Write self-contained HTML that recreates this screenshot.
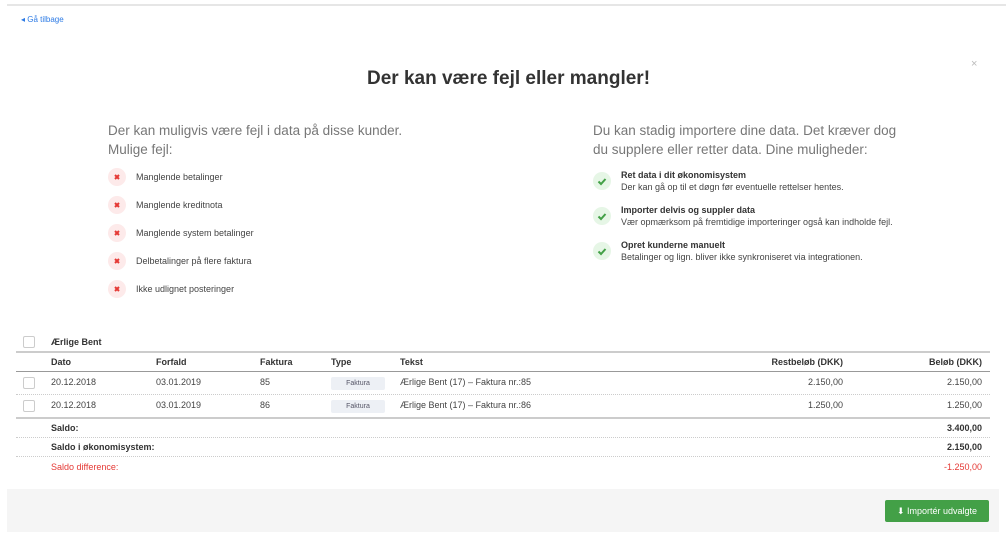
<!DOCTYPE html>
<html><head><meta charset="utf-8"><style>
*{margin:0;padding:0;box-sizing:border-box}
body{width:1006px;height:538px;background:#fff;font-family:"Liberation Sans",sans-serif;position:relative;overflow:hidden;color:#333}
.a{position:absolute;white-space:nowrap}
.ic{position:absolute;width:18px;height:18px;border-radius:50%;}
.x{background:#fdeaea}
.c{background:#e6f6e6}
.sm{font-size:9px;color:#444}
.hl{position:absolute;left:16px;width:974px}
.cb{position:absolute;left:23px;width:12px;height:12px;border:1px solid #ccc;border-radius:2px;background:#fff}
.tag{position:absolute;left:331px;width:54px;height:13px;background:#edf0f5;font-size:7px;color:#556;text-align:center;line-height:13px;border-radius:2px}
.r{text-align:right}
</style></head><body>
<div style="position:absolute;left:7px;right:0;top:4px;height:2px;background:#e6e6e6"></div>
<div class="a" style="left:21px;top:15px;font-size:8px;color:#2d7be5">&#9666; Gå tilbage</div>
<div class="a" style="left:971px;top:58px;font-size:11px;color:#bbb">×</div>
<div class="a" style="left:367px;top:68px;font-size:19px;font-weight:bold;color:#333">Der kan være fejl eller mangler!</div>

<div class="a" style="left:108px;top:121px;font-size:13.5px;color:#777;line-height:19px">Der kan muligvis være fejl i data på disse kunder.<br>Mulige fejl:</div>
<div class="ic x" style="left:108px;top:168px"><svg width="18" height="18"><path d="M7 7l4 4M11 7l-4 4" stroke="#e53935" stroke-width="2"/></svg></div><div class="a sm" style="left:136px;top:172px">Manglende betalinger</div>
<div class="ic x" style="left:108px;top:196px"><svg width="18" height="18"><path d="M7 7l4 4M11 7l-4 4" stroke="#e53935" stroke-width="2"/></svg></div><div class="a sm" style="left:136px;top:200px">Manglende kreditnota</div>
<div class="ic x" style="left:108px;top:224px"><svg width="18" height="18"><path d="M7 7l4 4M11 7l-4 4" stroke="#e53935" stroke-width="2"/></svg></div><div class="a sm" style="left:136px;top:228px">Manglende system betalinger</div>
<div class="ic x" style="left:108px;top:252px"><svg width="18" height="18"><path d="M7 7l4 4M11 7l-4 4" stroke="#e53935" stroke-width="2"/></svg></div><div class="a sm" style="left:136px;top:256px">Delbetalinger på flere faktura</div>
<div class="ic x" style="left:108px;top:280px"><svg width="18" height="18"><path d="M7 7l4 4M11 7l-4 4" stroke="#e53935" stroke-width="2"/></svg></div><div class="a sm" style="left:136px;top:284px">Ikke udlignet posteringer</div>

<div class="a" style="left:593px;top:121px;font-size:13.5px;color:#777;line-height:19px">Du kan stadig importere dine data. Det kræver dog<br>du supplere eller retter data. Dine muligheder:</div>
<div class="ic c" style="left:593px;top:172px"><svg width="18" height="18"><path d="M5.5 9.5l2.5 2.5 4.5-5" stroke="#43a047" stroke-width="2" fill="none"/></svg></div>
<div class="a" style="left:621px;top:170px;font-size:9px;font-weight:bold;color:#333">Ret data i dit økonomisystem</div>
<div class="a sm" style="left:621px;top:182px">Der kan gå op til et døgn før eventuelle rettelser hentes.</div>
<div class="ic c" style="left:593px;top:207px"><svg width="18" height="18"><path d="M5.5 9.5l2.5 2.5 4.5-5" stroke="#43a047" stroke-width="2" fill="none"/></svg></div>
<div class="a" style="left:621px;top:205px;font-size:9px;font-weight:bold;color:#333">Importer delvis og suppler data</div>
<div class="a sm" style="left:621px;top:217px">Vær opmærksom på fremtidige importeringer også kan indholde fejl.</div>
<div class="ic c" style="left:593px;top:242px"><svg width="18" height="18"><path d="M5.5 9.5l2.5 2.5 4.5-5" stroke="#43a047" stroke-width="2" fill="none"/></svg></div>
<div class="a" style="left:621px;top:240px;font-size:9px;font-weight:bold;color:#333">Opret kunderne manuelt</div>
<div class="a sm" style="left:621px;top:252px">Betalinger og lign. bliver ikke synkroniseret via integrationen.</div>

<div class="cb" style="top:336px"></div>
<div class="a" style="left:51px;top:337px;font-size:9px;font-weight:bold">Ærlige Bent</div>
<div class="hl" style="top:351px;height:2px;background:#ccc"></div>
<div class="a" style="left:51px;top:357px;font-size:9px;font-weight:bold">Dato</div>
<div class="a" style="left:156px;top:357px;font-size:9px;font-weight:bold">Forfald</div>
<div class="a" style="left:260px;top:357px;font-size:9px;font-weight:bold">Faktura</div>
<div class="a" style="left:331px;top:357px;font-size:9px;font-weight:bold">Type</div>
<div class="a" style="left:400px;top:357px;font-size:9px;font-weight:bold">Tekst</div>
<div class="a r" style="right:163px;top:357px;font-size:9px;font-weight:bold">Restbeløb (DKK)</div>
<div class="a r" style="right:24px;top:357px;font-size:9px;font-weight:bold">Beløb (DKK)</div>
<div class="hl" style="top:371px;height:1px;background:#999"></div>

<div class="cb" style="top:377px"></div>
<div class="a sm" style="left:51px;top:377px">20.12.2018</div><div class="a sm" style="left:156px;top:377px">03.01.2019</div><div class="a sm" style="left:260px;top:377px">85</div>
<div class="tag" style="top:377px">Faktura</div><div class="a sm" style="left:400px;top:377px">Ærlige Bent (17) – Faktura nr.:85</div>
<div class="a sm" style="right:163px;top:377px">2.150,00</div><div class="a sm" style="right:24px;top:377px">2.150,00</div>
<div class="hl" style="top:394px;border-top:1px dotted #ccc"></div>
<div class="cb" style="top:400px"></div>
<div class="a sm" style="left:51px;top:400px">20.12.2018</div><div class="a sm" style="left:156px;top:400px">03.01.2019</div><div class="a sm" style="left:260px;top:400px">86</div>
<div class="tag" style="top:400px">Faktura</div><div class="a sm" style="left:400px;top:400px">Ærlige Bent (17) – Faktura nr.:86</div>
<div class="a sm" style="right:163px;top:400px">1.250,00</div><div class="a sm" style="right:24px;top:400px">1.250,00</div>
<div class="hl" style="top:417px;height:2px;background:#ccc"></div>
<div class="a" style="left:51px;top:423px;font-size:9px;font-weight:bold">Saldo:</div>
<div class="a" style="right:24px;top:423px;font-size:9px;font-weight:bold">3.400,00</div>
<div class="hl" style="top:437px;border-top:1px dotted #ccc"></div>
<div class="a" style="left:51px;top:442px;font-size:9px;font-weight:bold">Saldo i økonomisystem:</div>
<div class="a" style="right:24px;top:442px;font-size:9px;font-weight:bold">2.150,00</div>
<div class="hl" style="top:456px;border-top:1px dotted #ccc"></div>
<div class="a" style="left:51px;top:462px;font-size:9px;color:#e53935">Saldo difference:</div>
<div class="a" style="right:24px;top:462px;font-size:9px;color:#e53935">-1.250,00</div>

<div style="position:absolute;left:7px;width:992px;top:489px;height:43px;background:#f5f5f5"></div>
<div style="position:absolute;left:885px;top:500px;width:104px;height:22px;background:#43a047;border-radius:2px;color:#fff;font-size:9px;line-height:22px;text-align:center">⬇ Importér udvalgte</div>
</body></html>
